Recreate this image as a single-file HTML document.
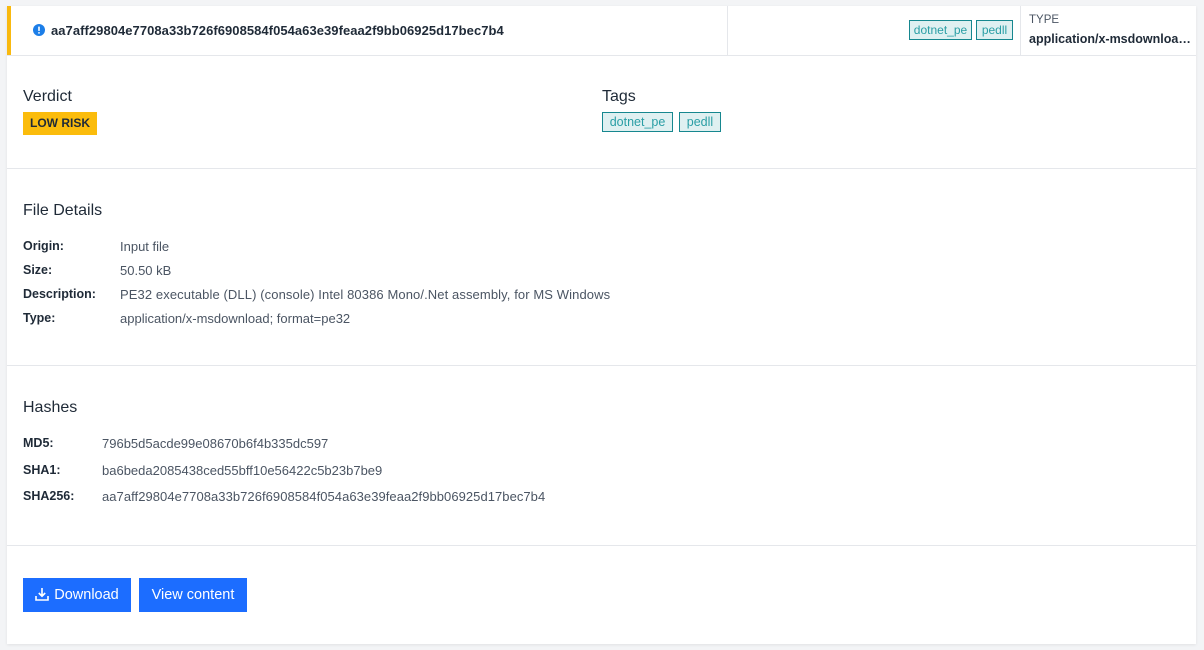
<!DOCTYPE html>
<html><head><meta charset="utf-8">
<style>
*{margin:0;padding:0;box-sizing:border-box}
body{width:1204px;height:650px;background:#f3f4f6;font-family:"Liberation Sans",Arial,sans-serif;color:#1f2a37;position:relative;overflow:hidden}
.card{position:absolute;left:7px;top:6px;width:1189px;height:638px;background:#fff;box-shadow:0 1px 3px rgba(0,0,0,.08)}
.a{position:absolute;white-space:nowrap}
.hr{position:absolute;left:0;width:1189px;height:1px;background:#e5e7eb}
.vr{position:absolute;top:0;width:1px;height:49px;background:#e5e7eb}
.tag{position:absolute;height:20px;border:1px solid #16878f;background:#dff0f1;color:#2a9ea5;font-size:12.5px;line-height:18px;text-align:center;white-space:nowrap}
.h{font-size:16px;color:#1f2a37}
.k{font-size:12.5px;font-weight:bold;color:#1f2a37}
.v{font-size:13px;color:#4b5563}
.btn{position:absolute;top:572px;height:34px;background:#1c6dff;color:#fff;font-size:14px;font-weight:bold;line-height:34px;text-align:center}
</style></head><body>
<div class="card">
  <div style="position:absolute;left:0;top:0;width:4px;height:49px;background:#f9b90f"></div>
  <svg class="a" style="left:26px;top:18px" width="12" height="12" viewBox="0 0 12 12"><circle cx="6" cy="6" r="6" fill="#1c7ee8"/><rect x="5.2" y="2.5" width="1.6" height="4.5" rx=".6" fill="#fff"/><circle cx="6" cy="8.9" r=".9" fill="#fff"/></svg>
  <div class="a" style="left:44px;top:17px;font-size:13px;font-weight:bold;letter-spacing:0.05px">aa7aff29804e7708a33b726f6908584f054a63e39feaa2f9bb06925d17bec7b4</div>
  <div class="vr" style="left:720px"></div>
  <div class="vr" style="left:1013px"></div>
  <div class="tag" style="left:902px;top:14px;width:63px;font-size:12px">dotnet_pe</div>
  <div class="tag" style="left:969px;top:14px;width:37px;font-size:12px">pedll</div>
  <div class="a" style="left:1022px;top:8px;font-size:11.5px;color:#4b5563">TYPE</div>
  <div class="a" style="left:1022px;top:26px;font-size:12.5px;font-weight:bold">application/x-msdownloa…</div>
  <div class="hr" style="top:49px"></div>

  <div class="a h" style="left:16px;top:82px">Verdict</div>
  <div class="a" style="left:16px;top:106px;width:74px;height:23px;background:#fbbc0c;font-size:12px;font-weight:bold;line-height:23px;text-align:center;color:#1f2a37">LOW RISK</div>
  <div class="a h" style="left:595px;top:82px">Tags</div>
  <div class="tag" style="left:595px;top:106px;width:71px">dotnet_pe</div>
  <div class="tag" style="left:672px;top:106px;width:42px">pedll</div>
  <div class="hr" style="top:162px"></div>

  <div class="a h" style="left:16px;top:196px">File Details</div>
  <div class="a k" style="left:16px;top:233px">Origin:</div><div class="a v" style="left:113px;top:233px">Input file</div>
  <div class="a k" style="left:16px;top:257px">Size:</div><div class="a v" style="left:113px;top:257px">50.50 kB</div>
  <div class="a k" style="left:16px;top:281px">Description:</div><div class="a v" style="left:113px;top:281px;letter-spacing:0.1px">PE32 executable (DLL) (console) Intel 80386 Mono/.Net assembly, for MS Windows</div>
  <div class="a k" style="left:16px;top:305px">Type:</div><div class="a v" style="left:113px;top:305px">application/x-msdownload; format=pe32</div>
  <div class="hr" style="top:359px"></div>

  <div class="a h" style="left:16px;top:393px">Hashes</div>
  <div class="a k" style="left:16px;top:430px">MD5:</div><div class="a v" style="left:95px;top:430px">796b5d5acde99e08670b6f4b335dc597</div>
  <div class="a k" style="left:16px;top:457px">SHA1:</div><div class="a v" style="left:95px;top:457px">ba6beda2085438ced55bff10e56422c5b23b7be9</div>
  <div class="a k" style="left:16px;top:483px">SHA256:</div><div class="a v" style="left:95px;top:483px;letter-spacing:0.05px">aa7aff29804e7708a33b726f6908584f054a63e39feaa2f9bb06925d17bec7b4</div>
  <div class="hr" style="top:539px"></div>

  <div class="btn" style="left:16px;width:108px;font-weight:normal;font-size:14.5px"><svg style="vertical-align:-2px;margin-right:5px" width="14" height="14" viewBox="0 0 14 14" fill="none" stroke="#fff" stroke-width="1.6"><path d="M7 1v8M3.8 6l3.2 3.2L10.2 6M1 9v4h12V9"/></svg>Download</div>
  <div class="btn" style="left:132px;width:108px;font-weight:normal;font-size:14.5px">View content</div>
</div>
</body></html>
